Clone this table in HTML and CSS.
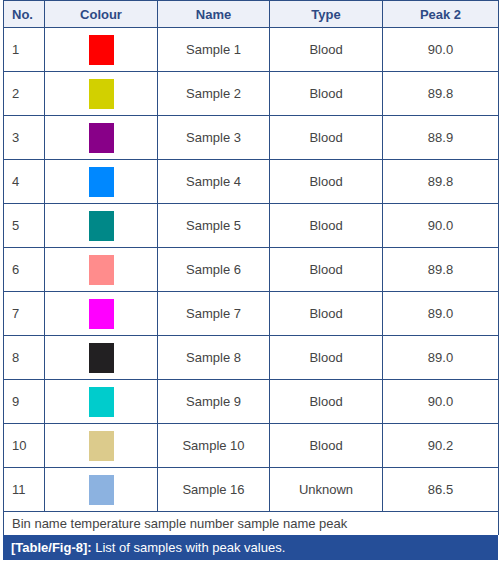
FILE: index.html
```html
<!DOCTYPE html>
<html>
<head>
<meta charset="utf-8">
<link rel="stylesheet" href="styles.css">
</head>
<body>
<div class="wrap">
<table class="tbl">
<colgroup>
<col class="c1"><col class="c2"><col class="c3"><col class="c4"><col class="c5">
</colgroup>
<thead>
<tr><th class="left">No.</th><th>Colour</th><th>Name</th><th>Type</th><th>Peak 2</th></tr>
</thead>
<tbody>
<tr><td class="left">1</td><td><span class="sw red"></span></td><td>Sample 1</td><td>Blood</td><td>90.0</td></tr>
<tr><td class="left">2</td><td><span class="sw yellow"></span></td><td>Sample 2</td><td>Blood</td><td>89.8</td></tr>
<tr><td class="left">3</td><td><span class="sw purple"></span></td><td>Sample 3</td><td>Blood</td><td>88.9</td></tr>
<tr><td class="left">4</td><td><span class="sw blue"></span></td><td>Sample 4</td><td>Blood</td><td>89.8</td></tr>
<tr><td class="left">5</td><td><span class="sw teal"></span></td><td>Sample 5</td><td>Blood</td><td>90.0</td></tr>
<tr><td class="left">6</td><td><span class="sw salmon"></span></td><td>Sample 6</td><td>Blood</td><td>89.8</td></tr>
<tr><td class="left">7</td><td><span class="sw magenta"></span></td><td>Sample 7</td><td>Blood</td><td>89.0</td></tr>
<tr><td class="left">8</td><td><span class="sw black"></span></td><td>Sample 8</td><td>Blood</td><td>89.0</td></tr>
<tr><td class="left">9</td><td><span class="sw cyan"></span></td><td>Sample 9</td><td>Blood</td><td>90.0</td></tr>
<tr><td class="left">10</td><td><span class="sw tan"></span></td><td>Sample 10</td><td>Blood</td><td>90.2</td></tr>
<tr><td class="left">11</td><td><span class="sw lblue"></span></td><td>Sample 16</td><td>Unknown</td><td>86.5</td></tr>
<tr class="foot"><td colspan="5" class="left">Bin name temperature sample number sample name peak</td></tr>
</tbody>
</table>
<div class="caption"><b>[Table/Fig-8]:</b> List of samples with peak values.</div>
</div>
</body>
</html>
```
FILE: styles.css
```css
html, body {
  margin: 0;
  padding: 0;
  background: #fff;
}
body {
  font-family: "Liberation Sans", Arial, sans-serif;
  font-size: 13px;
  color: #444444;
}
.wrap {
  padding-left: 3px;
  width: 495px;
}
.tbl {
  border-collapse: collapse;
  width: 495px;
  table-layout: fixed;
}
.c1 { width: 41px; }
.c2 { width: 113px; }
.c3 { width: 112px; }
.c4 { width: 113px; }
.c5 { width: 116px; }
.tbl th, .tbl td {
  border: 1px solid #2d4f86;
  text-align: center;
  vertical-align: middle;
  padding: 0;
}
.tbl th {
  background: #edf0f8;
  color: #2d4a85;
  font-weight: bold;
  height: 26px;
  font-size: 13px;
}
.tbl td {
  height: 43px;
}
.tbl .left {
  text-align: left;
  padding-left: 8px;
}
.tbl tr.foot td {
  height: 23px;
  border-bottom: none;
}
.sw {
  display: block;
  width: 25px;
  height: 30px;
  margin: 1px auto 0;
}
.red { background: #ff0000; }
.yellow { background: #d2d000; }
.purple { background: #880088; }
.blue { background: #0088ff; }
.teal { background: #008888; }
.salmon { background: #ff8c8c; }
.magenta { background: #ff00ff; }
.black { background: #222022; }
.cyan { background: #00cccc; }
.tan { background: #dccb8c; }
.lblue { background: #8cb2e0; }
.caption {
  background: #254e98;
  color: #fff;
  height: 25px;
  line-height: 25px;
  padding-left: 8px;
  font-size: 13px;
}
.caption b {
  font-weight: bold;
}
```
